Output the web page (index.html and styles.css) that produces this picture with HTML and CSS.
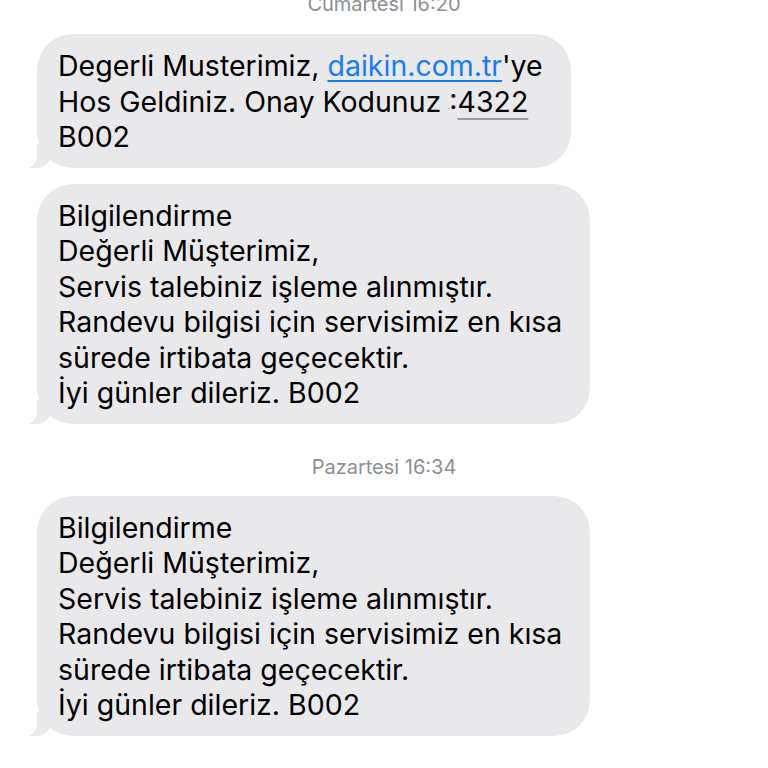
FILE: index.html
```html
<!DOCTYPE html>
<html lang="tr">
<head>
<meta charset="utf-8">
<link rel="stylesheet" href="styles.css">
</head>
<body>
<div class="thread">
  <div class="stamp stamp-first">Cumartesi 16:20</div>
  <div class="bubble bubble-short">Degerli Musterimiz, <span class="link">daikin.com.tr</span>'ye<br>Hos Geldiniz. Onay Kodunuz :<span class="code">4322</span><br>B002</div>
  <div class="bubble bubble-long">Bilgilendirme<br>Değerli Müşterimiz,<br>Servis talebiniz işleme alınmıştır.<br>Randevu bilgisi için servisimiz en kısa<br>sürede irtibata geçecektir.<br>İyi günler dileriz. B002</div>
  <div class="stamp stamp-mid">Pazartesi 16:34</div>
  <div class="bubble bubble-long">Bilgilendirme<br>Değerli Müşterimiz,<br>Servis talebiniz işleme alınmıştır.<br>Randevu bilgisi için servisimiz en kısa<br>sürede irtibata geçecektir.<br>İyi günler dileriz. B002</div>
</div>
</body>
</html>
```
FILE: styles.css
```css
html, body {
  margin: 0;
  padding: 0;
  background: #ffffff;
  overflow: hidden;
}
.thread {
  display: flex;
  flex-direction: column;
  align-items: flex-start;
  padding-left: 37px;
  font-family: Inter, "Noto Sans", sans-serif;
}
.stamp {
  align-self: stretch;
  margin-left: -37px;
  text-align: center;
  font-size: 20px;
  line-height: 22px;
  color: #8e8e93;
}
.stamp-first {
  margin-top: -7px;
  margin-bottom: 19px;
}
.stamp-mid {
  margin-top: 32px;
  margin-bottom: 18px;
}
.bubble {
  position: relative;
  box-sizing: border-box;
  background: #e9e9eb;
  border-radius: 36px;
  padding: 14px 10px 13px 21px;
  font-size: 28.5px;
  line-height: 35.5px;
  color: #000000;
}
.bubble::before {
  content: "";
  position: absolute;
  left: -8px;
  bottom: 0;
  width: 24px;
  height: 24px;
  background: #e9e9eb;
  border-bottom-right-radius: 18px;
}
.bubble::after {
  content: "";
  position: absolute;
  left: -14px;
  bottom: 0;
  width: 14px;
  height: 26px;
  background: #ffffff;
  border-bottom-right-radius: 12px;
}
.bubble-short {
  width: 534px;
  margin-bottom: 16px;
}
.bubble-long {
  width: 553px;
}
.link {
  color: #1a7cf5;
  text-decoration: underline;
  text-decoration-thickness: 1.5px;
  text-underline-offset: 4px;
}
.code {
  text-decoration: underline;
  text-decoration-color: #9a9aa0;
  text-decoration-thickness: 2px;
  text-underline-offset: 6px;
}
```
